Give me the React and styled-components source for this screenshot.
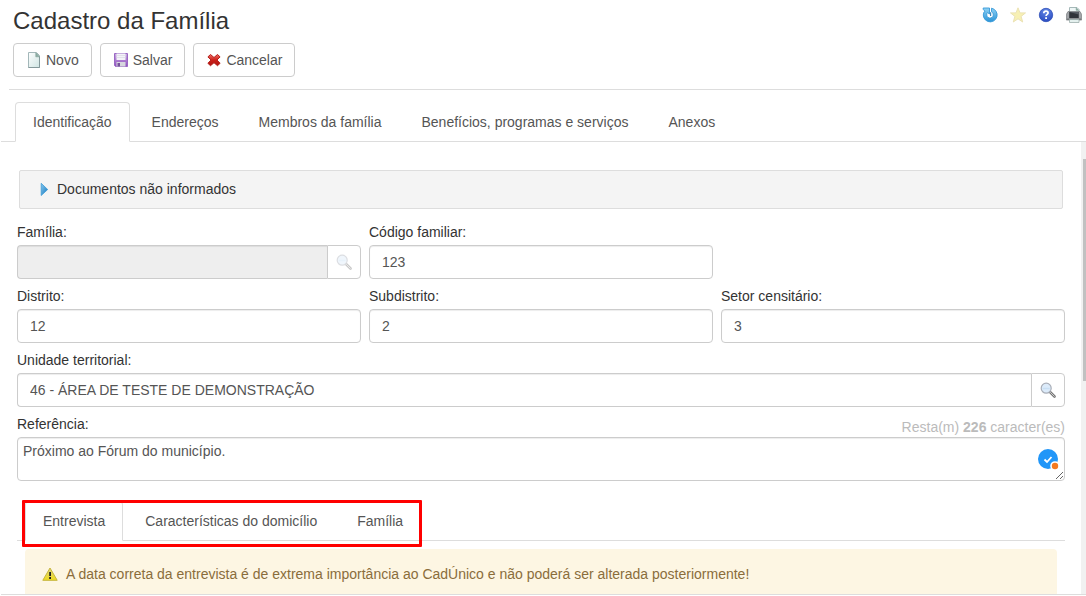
import React from "react";
import styled, { createGlobalStyle, css } from "styled-components";

const GlobalStyle = createGlobalStyle`
  *, *::before, *::after { box-sizing: border-box; }
  body {
    margin: 0;
    background: #fff;
    color: #333;
    font: 14px/20px "Liberation Sans", Arial, sans-serif;
  }
  button, input, textarea { font: inherit; color: inherit; margin: 0; }
`;

const Page = styled.div`
  display: flex;
  flex-direction: column;
  height: 100vh;
  overflow: hidden;
  padding-bottom: 1px;
`;

const Header = styled.header`
  display: flex;
  justify-content: space-between;
  align-items: flex-start;
  margin-left: 9px;
  padding: 7px 4px 12px;
  border-bottom: 1px solid #ddd;
`;

const Title = styled.h1`
  margin: 0 0 8px;
  font-size: 24px;
  line-height: 28px;
  font-weight: 400;
`;

const Toolbar = styled.div`
  display: flex;
  gap: 8px;
`;

const ToolButton = styled.button`
  display: flex;
  align-items: center;
  gap: 4px;
  height: 34px;
  padding: 0 12px;
  border: 1px solid #ccc;
  border-radius: 4px;
  background: #fff;
  color: #555;
  cursor: pointer;
`;

const Shortcuts = styled.nav`
  display: flex;
  gap: 12px;
`;

const IconButton = styled.button`
  display: flex;
  padding: 0;
  border: 0;
  background: none;
  cursor: pointer;
`;

const Tabs = styled.div`
  display: flex;
  flex: none;
  gap: 4px;
  border-bottom: 1px solid #ddd;
  ${(p) =>
    p.$nested
      ? css`
          padding-left: 8px;
        `
      : css`
          margin: 12px 0 0 1px;
          padding-left: 14px;
        `}
`;

const Tab = styled.button`
  height: 40px;
  margin-bottom: -1px;
  padding: 0 17px;
  border: 1px solid transparent;
  border-radius: 4px 4px 0 0;
  background: none;
  color: #555;
  cursor: pointer;
  ${(p) =>
    p["aria-selected"] &&
    css`
      border-color: #ddd #ddd #fff;
      background: #fff;
    `}
`;

const Body = styled.div`
  display: flex;
  flex: 1;
  min-height: 0;
  margin-left: 1px;
  border-bottom: 1px solid #ddd;
`;

const Content = styled.main`
  flex: 1;
  min-width: 0;
  overflow: hidden;
  padding: 28px 16px 0;
`;

const Rail = styled.div`
  flex: none;
  width: 5px;
  padding: 17px 0 0 2px;
  background: #f1f1f1;
`;

const Thumb = styled.div`
  height: 51%;
  background: #c1c1c1;
`;

const Accordion = styled.button`
  display: flex;
  align-items: center;
  gap: 4px;
  width: calc(100% - 4px);
  height: 39px;
  margin: 0 2px 13px;
  padding: 0 17px 2px;
  border: 1px solid #ddd;
  border-radius: 2px;
  background: #f4f4f4;
  text-align: left;
  cursor: pointer;
`;

const Grid = styled.form`
  display: grid;
  grid-template-columns: repeat(3, 1fr);
  gap: 7px 8px;
`;

const Field = styled.div`
  display: flex;
  flex-direction: column;
  gap: 3px;
  min-width: 0;
  grid-column: ${(p) => (p.$full ? "1 / -1" : p.$startsRow ? "1" : "auto")};
`;

const LabelRow = styled.div`
  display: flex;
  justify-content: space-between;
  height: 20px;
`;

const Counter = styled.span`
  padding-top: 3px;
  color: #bbb;
`;

const control = css`
  border: 1px solid #ccc;
  border-radius: 4px;
  background: #fff;
  color: #555;
  box-shadow: inset 0 1px 1px rgba(0, 0, 0, 0.075);
  outline: 0;
`;

const Input = styled.input`
  ${control}
  width: 100%;
  min-width: 0;
  height: 34px;
  padding: 0 12px;
  &:disabled {
    background: #eee;
  }
`;

const Lookup = styled.div`
  display: flex;
  ${Input} {
    flex: 1;
    border-right: 0;
    border-radius: 4px 0 0 4px;
  }
`;

const LookupButton = styled.button`
  display: flex;
  align-items: center;
  justify-content: center;
  width: 34px;
  height: 34px;
  padding: 0;
  border: 1px solid #ccc;
  border-radius: 0 4px 4px 0;
  background: #fff;
  cursor: pointer;
  &:disabled svg {
    opacity: 0.4;
  }
`;

const TextAreaBox = styled.div`
  position: relative;
  display: flex;
`;

const TextArea = styled.textarea`
  ${control}
  width: 100%;
  height: 44px;
  padding: 3px 5px;
  resize: vertical;
`;

const Badge = styled.span`
  position: absolute;
  right: 6px;
  top: 12px;
  display: flex;
`;

const NestedArea = styled.section`
  position: relative;
  margin-top: 20px;
`;

const Highlight = styled.div`
  position: absolute;
  left: 5px;
  top: -1px;
  width: 400px;
  height: 47px;
  border: 3px solid #f00;
  border-radius: 1px;
  pointer-events: none;
`;

const Alert = styled.p`
  display: flex;
  align-items: center;
  gap: 8px;
  height: 50px;
  margin: 8px 8px 0;
  padding: 0 17px;
  border-radius: 4px;
  background: #fdf6e3;
  color: #8a6d3b;
`;

const Svg = ({ children, ...rest }) => (
  <svg width="16" height="16" viewBox="0 0 16 16" aria-hidden="true" {...rest}>
    {children}
  </svg>
);

const PageIcon = () => (
  <Svg>
    <defs>
      <linearGradient id="sheet" x1="0" y1="0" x2="1" y2="1">
        <stop offset="0" stopColor="#fdfefe" />
        <stop offset="1" stopColor="#cfe4e2" />
      </linearGradient>
    </defs>
    <path d="M2.5.5h8l3 3v12h-11z" fill="url(#sheet)" stroke="#a3b7b9" />
    <path d="M13.500 5v10.500h-11" fill="none" stroke="#84989a" />
    <path d="M9.800.8v4h3.800z" fill="#8fb0a6" stroke="#7a9c92" strokeWidth=".6" />
  </Svg>
);

const DiskIcon = () => (
  <Svg>
    <defs>
      <linearGradient id="disk" x1="0" y1="0" x2="0" y2="1">
        <stop offset="0" stopColor="#c9addf" />
        <stop offset=".55" stopColor="#aa78cf" />
        <stop offset="1" stopColor="#8c4fbd" />
      </linearGradient>
    </defs>
    <path d="M1.500 1.500h13v13h-12l-1-1z" fill="url(#disk)" stroke="#9a68c4" />
    <path d="M3.500 1.500h9v6.500h-9z" fill="#f3f3f8" />
    <path d="M3.500 3.500h9M3.500 5.500h9" stroke="#dcdae6" strokeWidth=".8" />
    <path d="M3.500 10h9v4.500h-9z" fill="#d6d6de" />
    <path d="M4.500 11h2.500v3.500H4.500z" fill="#75529a" />
  </Svg>
);

const CrossIcon = () => (
  <Svg>
    <defs>
      <linearGradient id="cross" x1="0" y1="0" x2="0" y2="1">
        <stop offset="0" stopColor="#ef6c64" />
        <stop offset=".5" stopColor="#cc2019" />
        <stop offset="1" stopColor="#b01410" />
      </linearGradient>
    </defs>
    <path
      d="M4.500 2.500 8 5.500l3.500-3 2.600 2.400L11 8l3.100 3.300-2.600 2.400L8 10.700l-3.500 3-2.600-2.400L5 8 1.900 4.900z"
      fill="url(#cross)"
      stroke="#b5201b"
      strokeLinejoin="round"
    />
  </Svg>
);

const RefreshIcon = () => (
  <Svg>
    <defs>
      <linearGradient id="refresh" x1="0" y1="0" x2="0" y2="1">
        <stop offset="0" stopColor="#8fd2f5" />
        <stop offset="1" stopColor="#2a93d6" />
      </linearGradient>
    </defs>
    <path
      d="M9.500 1.200A6.900 6.900 0 1 1 1.900 5.200L3 4.300 1.200 2.300V1h6.300v6L5.500 5.600a3.300 3.300 0 1 0 4-.8z"
      fill="url(#refresh)"
      stroke="#3598d8"
      strokeWidth=".9"
      strokeLinejoin="round"
    />
    <path d="M8.600 5.300v3.700" stroke="#3c86b8" strokeWidth="1.200" />
  </Svg>
);

const StarIcon = () => (
  <Svg>
    <path
      d="M8 .8l2 5.100h5.500l-4.400 3.500 1.600 5.600L8 11.800 3.300 15l1.600-5.600L.5 5.900H6z"
      fill="#f7f0b4"
      stroke="#ebe2b4"
      strokeLinejoin="round"
    />
  </Svg>
);

const HelpIcon = () => (
  <Svg>
    <defs>
      <radialGradient id="help" cx=".5" cy=".2" r=".9">
        <stop offset="0" stopColor="#6488e6" />
        <stop offset="1" stopColor="#2344bd" />
      </radialGradient>
    </defs>
    <circle cx="8" cy="8" r="6.700" fill="url(#help)" stroke="#2f4fb8" strokeWidth=".8" />
    <path
      d="M5.800 6.300c0-1.400.9-2.100 2.200-2.100s2.100.7 2.100 1.800c0 1.400-2 1.500-2 3"
      fill="none"
      stroke="#fff"
      strokeWidth="1.700"
    />
    <path d="M7.200 10.200h1.800v1.800H7.200z" fill="#fff" />
  </Svg>
);

const PrinterIcon = () => (
  <Svg>
    <path d="M3.500.5h7.500l2 2V6h-9.500z" fill="#eef6f6" stroke="#a5b8b8" />
    <path d="M10.200.7v2.600h2.700" fill="#86a79c" stroke="#86a79c" strokeWidth=".7" />
    <path d="M2 4.500h12l1.700 3V13H.3V7.500z" fill="#a2a5a8" stroke="#74777a" strokeWidth=".7" />
    <path d="M3.200 5h9.600v6H3.200z" fill="#30343a" />
    <path d="M3.200 5h9.600v2.500z" fill="#555b63" />
    <path d="M1 11.500h14v1.500H1z" fill="#77797c" />
    <path d="M3.500 12.500h9.500v3H3.500z" fill="#e4f0ee" stroke="#9cadab" strokeWidth=".8" />
  </Svg>
);

const ArrowIcon = () => (
  <Svg>
    <defs>
      <linearGradient id="arrow" x1="0" y1="0" x2="1" y2="1">
        <stop offset="0" stopColor="#86c8f0" />
        <stop offset="1" stopColor="#1477bd" />
      </linearGradient>
    </defs>
    <path d="M4.200 2.300 10.700 8.500l-6.500 6z" fill="url(#arrow)" stroke="#3d9ad6" strokeWidth=".8" />
  </Svg>
);

const SearchIcon = () => (
  <Svg>
    <path d="M10 10l4.500 4.500" stroke="#777" strokeWidth="2.600" strokeLinecap="round" />
    <path d="M10.500 10.500l3.800 3.800" stroke="#ccc" strokeWidth="1" strokeLinecap="round" />
    <circle cx="6.200" cy="6.200" r="5" fill="#dcebfa" stroke="#a9aeb8" strokeWidth="1.200" />
    <path d="M2.700 6.500h7" stroke="#c8dff4" strokeWidth="1.500" />
  </Svg>
);

const WarningIcon = () => (
  <Svg>
    <defs>
      <linearGradient id="warning" x1="0" y1="0" x2="0" y2="1">
        <stop offset="0" stopColor="#ddd480" />
        <stop offset="1" stopColor="#f0dc1e" />
      </linearGradient>
    </defs>
    <path
      d="M8 2 15.200 14.300H.8z"
      fill="url(#warning)"
      stroke="#c6b63c"
      strokeLinejoin="round"
    />
    <path d="M7.200 6h1.800v4H7.200zM7.200 11h1.800v2H7.200z" fill="#222" />
  </Svg>
);

const CheckBadge = () => (
  <svg width="21" height="21" viewBox="0 0 21 21" aria-hidden="true">
    <circle cx="10" cy="10" r="10" fill="#2196f8" />
    <path d="M6.500 10.500l2.500 2.500 4.500-5" fill="none" stroke="#fff" strokeWidth="1.800" />
    <circle cx="17" cy="17" r="4.800" fill="#fff" />
    <circle cx="17" cy="17" r="3.200" fill="#f47a20" />
  </svg>
);

const TextField = ({ id, label, value, startsRow }) => (
  <Field $startsRow={startsRow}>
    <label htmlFor={id}>{label}</label>
    <Input id={id} defaultValue={value} />
  </Field>
);

const LookupField = ({ id, label, value, disabled, full }) => (
  <Field $full={full}>
    <label htmlFor={id}>{label}</label>
    <Lookup>
      <Input id={id} defaultValue={value} disabled={disabled} />
      <LookupButton type="button" aria-label="Pesquisar" disabled={disabled}>
        <SearchIcon />
      </LookupButton>
    </Lookup>
  </Field>
);

const TabBar = ({ items, nested }) => (
  <Tabs role="tablist" $nested={nested}>
    {items.map((name, i) => (
      <Tab key={name} type="button" role="tab" aria-selected={i === 0}>
        {name}
      </Tab>
    ))}
  </Tabs>
);

export default function App() {
  return (
    <Page>
      <GlobalStyle />
      <Header>
        <div>
          <Title>Cadastro da Família</Title>
          <Toolbar>
            <ToolButton type="button"><PageIcon />Novo</ToolButton>
            <ToolButton type="button"><DiskIcon />Salvar</ToolButton>
            <ToolButton type="button"><CrossIcon />Cancelar</ToolButton>
          </Toolbar>
        </div>
        <Shortcuts>
          <IconButton type="button" aria-label="Atualizar"><RefreshIcon /></IconButton>
          <IconButton type="button" aria-label="Favorito"><StarIcon /></IconButton>
          <IconButton type="button" aria-label="Ajuda"><HelpIcon /></IconButton>
          <IconButton type="button" aria-label="Imprimir"><PrinterIcon /></IconButton>
        </Shortcuts>
      </Header>
      <TabBar
        items={[
          "Identificação",
          "Endereços",
          "Membros da família",
          "Benefícios, programas e serviços",
          "Anexos",
        ]}
      />
      <Body>
        <Content>
          <Accordion type="button" aria-expanded={false}>
            <ArrowIcon />
            Documentos não informados
          </Accordion>
          <Grid>
            <LookupField id="familia" label="Família:" disabled />
            <TextField id="codigo" label="Código familiar:" value="123" />
            <TextField id="distrito" label="Distrito:" value="12" startsRow />
            <TextField id="subdistrito" label="Subdistrito:" value="2" />
            <TextField id="setor" label="Setor censitário:" value="3" />
            <LookupField
              id="unidade"
              label="Unidade territorial:"
              value="46 - ÁREA DE TESTE DE DEMONSTRAÇÃO"
              full
            />
            <Field $full>
              <LabelRow>
                <label htmlFor="referencia">Referência:</label>
                <Counter>
                  Resta(m) <b>226</b> caracter(es)
                </Counter>
              </LabelRow>
              <TextAreaBox>
                <TextArea
                  id="referencia"
                  spellCheck={false}
                  defaultValue="Próximo ao Fórum do município."
                />
                <Badge><CheckBadge /></Badge>
              </TextAreaBox>
            </Field>
          </Grid>
          <NestedArea>
            <TabBar nested items={["Entrevista", "Características do domicílio", "Família"]} />
            <Highlight />
            <Alert>
              <WarningIcon />
              A data correta da entrevista é de extrema importância ao CadÚnico e não poderá ser
              alterada posteriormente!
            </Alert>
          </NestedArea>
        </Content>
        <Rail>
          <Thumb />
        </Rail>
      </Body>
    </Page>
  );
}
